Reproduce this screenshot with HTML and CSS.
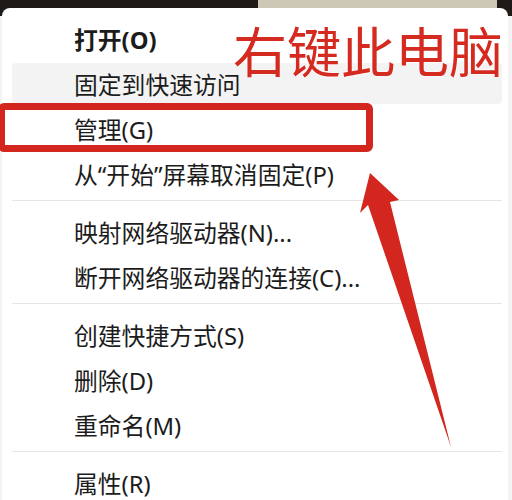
FILE: index.html
```html
<!DOCTYPE html>
<html lang="zh-CN">
<head>
<meta charset="utf-8">
<title>右键此电脑</title>
<link rel="stylesheet" href="styles.css">
</head>
<body>
<div class="page">
  <div class="menu">
    <div class="item bold">打开(O)</div>
    <div class="item hover">固定到快速访问</div>
    <div class="item">管理(G)</div>
    <div class="item">从“开始”屏幕取消固定(P)</div>
    <div class="sep"></div>
    <div class="item">映射网络驱动器(N)...</div>
    <div class="item">断开网络驱动器的连接(C)...</div>
    <div class="sep"></div>
    <div class="item">创建快捷方式(S)</div>
    <div class="item">删除(D)</div>
    <div class="item">重命名(M)</div>
    <div class="sep"></div>
    <div class="item">属性(R)</div>
  </div>
  <div class="mark-box"></div>
  <div class="mark-title">右键此电脑</div>
  <svg class="mark-arrow" width="512" height="500" viewBox="0 0 512 500">
    <polygon points="370,173 399,200 390,202 451,447 368,205 360,213" fill="#d3261e"/>
  </svg>
</div>
</body>
</html>
```
FILE: styles.css
```css
html, body {
  margin: 0;
  padding: 0;
}
body {
  font-family: "Noto Sans", "Noto Sans CJK SC", sans-serif;
}
.page {
  position: relative;
  width: 512px;
  height: 500px;
  overflow: hidden;
  background:
    linear-gradient(to right, #1d1a17 0, #1d1a17 258px, #cdc7b6 258px, #cdc7b6 497px, #1d1a17 497px) top left / 512px 16px no-repeat,
    #f4f4f4;
  display: flex;
  flex-direction: column;
}
.menu {
  margin: 8px 0 0 2px;
  width: 506px;
  background: #ffffff;
  border-radius: 8px 8px 0 0;
  padding: 8px 6px 0 10px;
  box-sizing: border-box;
  display: flex;
  flex-direction: column;
  flex-shrink: 0;
}
.item {
  height: 41px;
  margin: 2px 0;
  padding-left: 62px;
  display: flex;
  align-items: center;
  font-size: 23.8px;
  color: #1c1c1c;
  border-radius: 4px;
  white-space: nowrap;
}
.item.bold {
  font-weight: 700;
}
.item.hover {
  background: #f3f3f3;
}
.sep {
  height: 1px;
  background: #e6e6e6;
  margin: 4px 0 8px 0;
}
.mark-box {
  position: absolute;
  left: -2px;
  top: 103px;
  width: 375px;
  height: 49px;
  box-sizing: border-box;
  border: 7px solid #d3261e;
  border-radius: 6px;
}
.mark-title {
  position: absolute;
  left: 233px;
  top: 23px;
  font-family: "Noto Sans CJK SC", sans-serif;
  font-size: 54px;
  line-height: 1;
  color: #d42a1f;
  font-weight: 400;
  text-shadow: 0 0 2px #fff, 0 0 2px #fff;
  white-space: nowrap;
}
.mark-arrow {
  position: absolute;
  left: 0;
  top: 0;
}
```
